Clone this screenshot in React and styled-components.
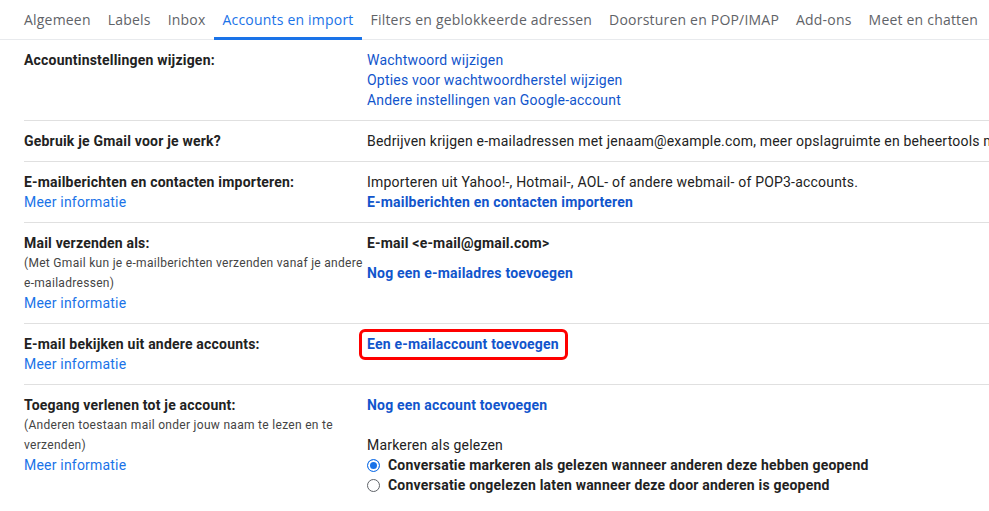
import React from "react";
import styled, { createGlobalStyle } from "styled-components";

const Global = createGlobalStyle`
  html, body { margin: 0; padding: 0; background: #fff; }
  body { overflow: hidden; width: 989px; height: 511px; font-family: Roboto, "Liberation Sans", Arial, sans-serif; }
  * { box-sizing: border-box; }
`;

const Page = styled.div`
  width: 989px;
  height: 511px;
  overflow: hidden;
  background: #fff;
`;

const TabBar = styled.nav`
  display: flex;
  height: 40px;
  padding-left: 16px;
  border-bottom: 1px solid #e8eaed;
  white-space: nowrap;
`;

const Tab = styled.div`
  position: relative;
  display: flex;
  align-items: center;
  padding: 0 8px;
  margin-right: 1px;
  font-family: "Open Sans", Roboto, sans-serif;
  font-size: 14px;
  letter-spacing: 0.2px;
  color: ${(p) => (p.$active ? "#1a73e8" : "#5f6368")};
  &::after {
    content: "";
    position: absolute;
    left: 0;
    right: 0;
    bottom: -1px;
    height: 3px;
    background: ${(p) => (p.$active ? "#1a73e8" : "transparent")};
  }
`;

const Table = styled.div`
  padding-left: 24px;
`;

const Row = styled.div`
  display: flex;
  padding: 10px 0 10px;
  border-top: ${(p) => (p.$first ? "none" : "1px solid #e0e0e0")};
  font-size: 14px;
  line-height: 20px;
  letter-spacing: 0.2px;
  color: #222;
`;

const LabelCol = styled.div`
  flex: 0 0 343px;
  width: 343px;
`;

const ValueCol = styled.div`
  flex: 1;
  display: flex;
  flex-direction: column;
  align-items: flex-start;
  white-space: nowrap;
  min-width: 0;
`;

const Label = styled.div`
  font-weight: 700;
  color: #222;
`;

const Note = styled.div`
  font-size: 12px;
  letter-spacing: 0.3px;
  color: #444;
  line-height: 20px;
`;

const InfoLink = styled.a`
  color: #1a73e8;
  text-decoration: none;
  display: block;
`;

const Link = styled.a`
  color: #1155cc;
  text-decoration: none;
  font-weight: ${(p) => (p.$bold ? 700 : 400)};
  margin-top: ${(p) => p.$mt || 0}px;
`;

const Text = styled.div`
  color: #222;
  font-weight: ${(p) => (p.$bold ? 700 : 400)};
  margin-top: ${(p) => p.$mt || 0}px;
`;

const Highlight = styled.span`
  position: relative;
  display: inline-block;
  &::before {
    content: "";
    position: absolute;
    left: -8px;
    right: -9px;
    top: -5px;
    bottom: -6px;
    border: 3px solid #f00;
    border-radius: 6px;
  }
`;

const RadioRow = styled.label`
  display: flex;
  align-items: center;
  font-weight: 700;
  color: #222;
`;

const Radio = styled.span`
  width: 13px;
  height: 13px;
  border-radius: 50%;
  margin-right: 8px;
  flex: 0 0 13px;
  border: 1px solid ${(p) => (p.$checked ? "#1a73e8" : "#5f6368")};
  background: ${(p) => (p.$checked ? "#1a73e8" : "#fff")};
  box-shadow: ${(p) => (p.$checked ? "inset 0 0 0 2px #fff" : "none")};
`;

const tabs = [
  "Algemeen",
  "Labels",
  "Inbox",
  "Accounts en import",
  "Filters en geblokkeerde adressen",
  "Doorsturen en POP/IMAP",
  "Add-ons",
  "Meet en chatten",
];

export default function App() {
  return (
    <Page>
      <Global />
      <TabBar>
        {tabs.map((t) => (
          <Tab key={t} $active={t === "Accounts en import"}>
            {t}
          </Tab>
        ))}
      </TabBar>
      <Table>
        <Row $first>
          <LabelCol>
            <Label>Accountinstellingen wijzigen:</Label>
          </LabelCol>
          <ValueCol>
            <Link>Wachtwoord wijzigen</Link>
            <Link>Opties voor wachtwoordherstel wijzigen</Link>
            <Link>Andere instellingen van Google-account</Link>
          </ValueCol>
        </Row>
        <Row>
          <LabelCol>
            <Label>Gebruik je Gmail voor je werk?</Label>
          </LabelCol>
          <ValueCol>
            <Text>
              Bedrijven krijgen e-mailadressen met jenaam@example.com, meer
              opslagruimte en beheertools met Google Workspace.
            </Text>
          </ValueCol>
        </Row>
        <Row>
          <LabelCol>
            <Label>E-mailberichten en contacten importeren:</Label>
            <InfoLink>Meer informatie</InfoLink>
          </LabelCol>
          <ValueCol>
            <Text>
              Importeren uit Yahoo!-, Hotmail-, AOL- of andere webmail- of
              POP3-accounts.
            </Text>
            <Link $bold>E-mailberichten en contacten importeren</Link>
          </ValueCol>
        </Row>
        <Row>
          <LabelCol>
            <Label>Mail verzenden als:</Label>
            <Note>
              (Met Gmail kun je e-mailberichten verzenden vanaf je andere
              e-mailadressen)
            </Note>
            <InfoLink>Meer informatie</InfoLink>
          </LabelCol>
          <ValueCol>
            <Text $bold>E-mail &lt;e-mail@gmail.com&gt;</Text>
            <Link $bold $mt={10}>
              Nog een e-mailadres toevoegen
            </Link>
          </ValueCol>
        </Row>
        <Row>
          <LabelCol>
            <Label>E-mail bekijken uit andere accounts:</Label>
            <InfoLink>Meer informatie</InfoLink>
          </LabelCol>
          <ValueCol>
            <Highlight>
              <Link $bold>Een e-mailaccount toevoegen</Link>
            </Highlight>
          </ValueCol>
        </Row>
        <Row>
          <LabelCol>
            <Label>Toegang verlenen tot je account:</Label>
            <Note>
              (Anderen toestaan mail onder jouw naam te lezen en te verzenden)
            </Note>
            <InfoLink>Meer informatie</InfoLink>
          </LabelCol>
          <ValueCol>
            <Link $bold>Nog een account toevoegen</Link>
            <Text $mt={20}>Markeren als gelezen</Text>
            <RadioRow>
              <Radio $checked />
              Conversatie markeren als gelezen wanneer anderen deze hebben
              geopend
            </RadioRow>
            <RadioRow>
              <Radio />
              Conversatie ongelezen laten wanneer deze door anderen is geopend
            </RadioRow>
          </ValueCol>
        </Row>
      </Table>
    </Page>
  );
}
